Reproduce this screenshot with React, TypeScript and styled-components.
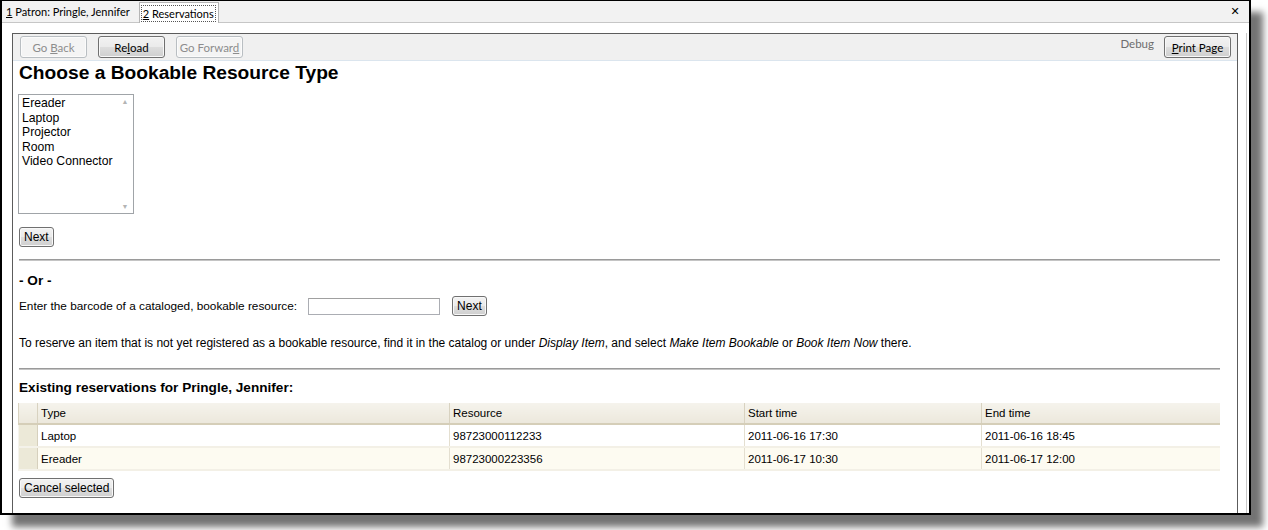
import React from 'react'
import styled, { createGlobalStyle, css } from 'styled-components'

const GlobalStyle = createGlobalStyle`
  html, body {
    margin: 0;
    padding: 0;
    background: #fff;
  }
  body {
    font-family: 'Liberation Sans', Arial, sans-serif;
    color: #000;
  }
`

const uiFont = `'Lato', 'Liberation Sans', sans-serif`

const Page = styled.div`
  width: 1268px;
  height: 530px;
  overflow: hidden;
  background: #fff;
`

const Frame = styled.div`
  width: 1251px;
  height: 515px;
  box-sizing: border-box;
  border: 2px solid #000;
  border-top-width: 1px;
  background: #fff;
  display: flex;
  flex-direction: column;
  box-shadow: 12px 12px 7px rgba(0, 0, 0, 0.55);
`

const TabStrip = styled.div`
  height: 21px;
  flex: none;
  display: flex;
  align-items: stretch;
  background: #f2f2f2;
  border-bottom: 1px solid #c6c6c6;
  font-family: ${uiFont};
  font-size: 11px;
`

const Tab = styled.div<{ selected?: boolean }>`
  display: flex;
  align-items: center;
  padding: 0 3px 0 2px;
  color: #000;
  ${(p) =>
    p.selected &&
    css`
      background: #fff;
      border: 1px solid #b5b5b5;
      border-bottom: none;
      margin: 1px 0 -1px 4px;
      padding: 0 2px 0 1px;
    `}
`

const TabLabel = styled.span<{ focused?: boolean }>`
  padding: 1px 1px;
  border: 1px dotted ${(p) => (p.focused ? '#555' : 'transparent')};
`

const Close = styled.div`
  margin-left: auto;
  width: 20px;
  display: flex;
  align-items: center;
  justify-content: center;
  font-family: 'DejaVu Sans', sans-serif;
  font-weight: bold;
  font-size: 11px;
  margin-right: 4px;
`

const ContentArea = styled.div`
  flex: 1;
  display: flex;
  min-height: 0;
  padding: 10px 2px 0 10px;
`

const Scroller = styled.div`
  flex: 1;
  display: flex;
  min-height: 0;
  padding-right: 8px;
  border-right: 1px solid #c9c9c9;
`

const Panel = styled.div`
  flex: 1;
  display: flex;
  flex-direction: column;
  border: 1px solid #5c5c5c;
  border-bottom: none;
  min-height: 0;
  overflow: hidden;
`

const Toolbar = styled.div`
  flex: none;
  height: 26px;
  display: flex;
  align-items: center;
  gap: 11px;
  padding: 0 6px 0 7px;
  background: #f0f0f0;
  border-bottom: 1px solid #dbe5ee;
`

const ToolButton = styled.button<{ disabled?: boolean }>`
  height: 22px;
  width: 67px;
  box-sizing: border-box;
  padding: 0;
  font-family: ${uiFont};
  font-size: 11.5px;
  border-radius: 3px;
  color: ${(p) => (p.disabled ? '#8d8d8d' : '#000')};
  border: 1px solid ${(p) => (p.disabled ? '#b9bec2' : '#707070')};
  background: ${(p) =>
    p.disabled
      ? '#f4f4f4'
      : 'linear-gradient(#f2f2f2 0%, #ebebeb 48%, #dddddd 52%, #cfcfcf 100%)'};
  box-shadow: inset 0 0 0 1px ${(p) => (p.disabled ? '#fbfbfb' : '#f8f8f8')};
`

const Spacer = styled.div`
  flex: 1;
`

const DebugLink = styled.span`
  font-family: ${uiFont};
  font-size: 11.5px;
  color: #6d6d6d;
  align-self: flex-start;
  margin-top: 3px;
  margin-right: -1px;
`

const Body = styled.div`
  padding: 0 6px;
  display: flex;
  flex-direction: column;
  align-items: flex-start;
`

const Heading = styled.h1`
  margin: 1px 0 0;
  font-size: 19.2px;
  line-height: 22px;
  font-weight: bold;
`

const SubHeading = styled.h3<{ gap: number }>`
  margin: ${(p) => p.gap}px 0 0;
  font-size: 13.6px;
  line-height: 16px;
  font-weight: bold;
`

const ListBox = styled.div`
  margin: 10px 0 0 -1px;
  width: 116px;
  height: 120px;
  box-sizing: border-box;
  border: 1px solid #a0a4a8;
  display: flex;
  background: #fff;
`

const ListItems = styled.ul`
  flex: 1;
  list-style: none;
  margin: 0;
  padding: 1px 0 0 3px;
  font-size: 12.2px;
  line-height: 14.6px;
`

const ScrollTrack = styled.div`
  width: 16px;
  display: flex;
  flex-direction: column;
  justify-content: space-between;
  align-items: center;
  padding: 3px 0 3px;
  color: #b4b4b4;
  font-size: 7px;
`

const PlainButton = styled.button<{ gap?: number }>`
  font-family: 'Liberation Sans', Arial, sans-serif;
  font-size: 12px;
  height: 20px;
  margin-top: ${(p) => p.gap ?? 0}px;
  padding: 0 4px;
  border: 1px solid #707070;
  border-radius: 3px;
  color: #000;
  background: linear-gradient(#f2f2f2 0%, #ebebeb 48%, #dddddd 52%, #cfcfcf 100%);
  box-shadow: inset 0 0 0 1px #f8f8f8;
`

const Divider = styled.hr<{ gap: number }>`
  margin: ${(p) => p.gap}px 0 0;
  height: 0;
  border: none;
  border-top: 1px solid #9a9a9a;
  border-bottom: 1px solid #c4c4c4;
  width: 1201px;
`

const Row = styled.div`
  display: flex;
  align-items: center;
  margin-top: 7px;
  font-size: 11.8px;
`

const BarcodeInput = styled.input`
  width: 132px;
  height: 17px;
  box-sizing: border-box;
  margin: 0 12px 0 11px;
  border: 1px solid #abadb3;
  border-top-color: #a0a0a0;
`

const Paragraph = styled.p`
  margin: 20px 0 0;
  font-size: 12px;
  line-height: 14px;
`

const Table = styled.table`
  border-collapse: collapse;
  table-layout: fixed;
  width: 1201px;
  font-size: 11.5px;
  margin: 7px 0 0 -1px;
`

const HeadCell = styled.th`
  text-align: left;
  font-weight: normal;
  height: 20px;
  padding: 0 3px;
  background: linear-gradient(#f5f3ec, #ece8dc);
  border-left: 1px solid #d8d2c0;
  border-bottom: 2px solid #d5ceb8;
`

const SelectorCell = styled.td`
  padding: 0;
  background: #ece9d8;
  border-right: 1px solid #d6d0bd;
  border-left: 1px solid #f6f4ee;
  border-bottom: 2px solid #f4f2ea;
  height: 21px;
`

const Cell = styled.td<{ alt?: boolean }>`
  padding: 0 3px;
  height: 21px;
  white-space: nowrap;
  background: ${(p) => (p.alt ? '#fdfbf1' : '#fff')};
  border-left: 1px solid #e4dfd0;
  border-bottom: 2px solid #f3f0e6;
`

const columns = [
  { label: '', width: 19 },
  { label: 'Type', width: 412 },
  { label: 'Resource', width: 295 },
  { label: 'Start time', width: 237 },
  { label: 'End time', width: 238 },
]

const reservations = [
  { type: 'Laptop', resource: '98723000112233', start: '2011-06-16 17:30', end: '2011-06-16 18:45' },
  { type: 'Ereader', resource: '98723000223356', start: '2011-06-17 10:30', end: '2011-06-17 12:00' },
]

const resourceTypes = ['Ereader', 'Laptop', 'Projector', 'Room', 'Video Connector']

const App = () => (
  <Page>
    <GlobalStyle />
    <Frame>
      <TabStrip>
        <Tab>
          <TabLabel>
            <u>1</u> Patron: Pringle, Jennifer
          </TabLabel>
        </Tab>
        <Tab selected>
          <TabLabel focused>
            <u>2</u> Reservations
          </TabLabel>
        </Tab>
        <Close>✕</Close>
      </TabStrip>
      <ContentArea>
        <Scroller>
          <Panel>
            <Toolbar>
              <ToolButton disabled>
                Go <u>B</u>ack
              </ToolButton>
              <ToolButton>
                Re<u>l</u>oad
              </ToolButton>
              <ToolButton disabled>
                Go Forwar<u>d</u>
              </ToolButton>
              <Spacer />
              <DebugLink>Debug</DebugLink>
              <ToolButton>
                <u>P</u>rint Page
              </ToolButton>
            </Toolbar>
            <Body>
              <Heading>Choose a Bookable Resource Type</Heading>
              <ListBox>
                <ListItems>
                  {resourceTypes.map((t) => (
                    <li key={t}>{t}</li>
                  ))}
                </ListItems>
                <ScrollTrack>
                  <span>▲</span>
                  <span>▼</span>
                </ScrollTrack>
              </ListBox>
              <PlainButton gap={13}>Next</PlainButton>
              <Divider gap={12} />
              <SubHeading gap={12}>- Or -</SubHeading>
              <Row>
                Enter the barcode of a cataloged, bookable resource:
                <BarcodeInput />
                <PlainButton>Next</PlainButton>
              </Row>
              <Paragraph>
                To reserve an item that is not yet registered as a bookable resource, find it in the
                catalog or under <i>Display Item</i>, and select <i>Make Item Bookable</i> or{' '}
                <i>Book Item Now</i> there.
              </Paragraph>
              <Divider gap={18} />
              <SubHeading gap={10}>Existing reservations for Pringle, Jennifer:</SubHeading>
              <Table>
                <colgroup>
                  {columns.map((c, i) => (
                    <col key={i} style={{ width: c.width }} />
                  ))}
                </colgroup>
                <thead>
                  <tr>
                    {columns.map((c, i) => (
                      <HeadCell key={i}>{c.label}</HeadCell>
                    ))}
                  </tr>
                </thead>
                <tbody>
                  {reservations.map((r, i) => (
                    <tr key={r.resource}>
                      <SelectorCell />
                      <Cell alt={i % 2 === 1}>{r.type}</Cell>
                      <Cell alt={i % 2 === 1}>{r.resource}</Cell>
                      <Cell alt={i % 2 === 1}>{r.start}</Cell>
                      <Cell alt={i % 2 === 1}>{r.end}</Cell>
                    </tr>
                  ))}
                </tbody>
              </Table>
              <PlainButton gap={7}>Cancel selected</PlainButton>
            </Body>
          </Panel>
        </Scroller>
      </ContentArea>
    </Frame>
  </Page>
)

export default App
